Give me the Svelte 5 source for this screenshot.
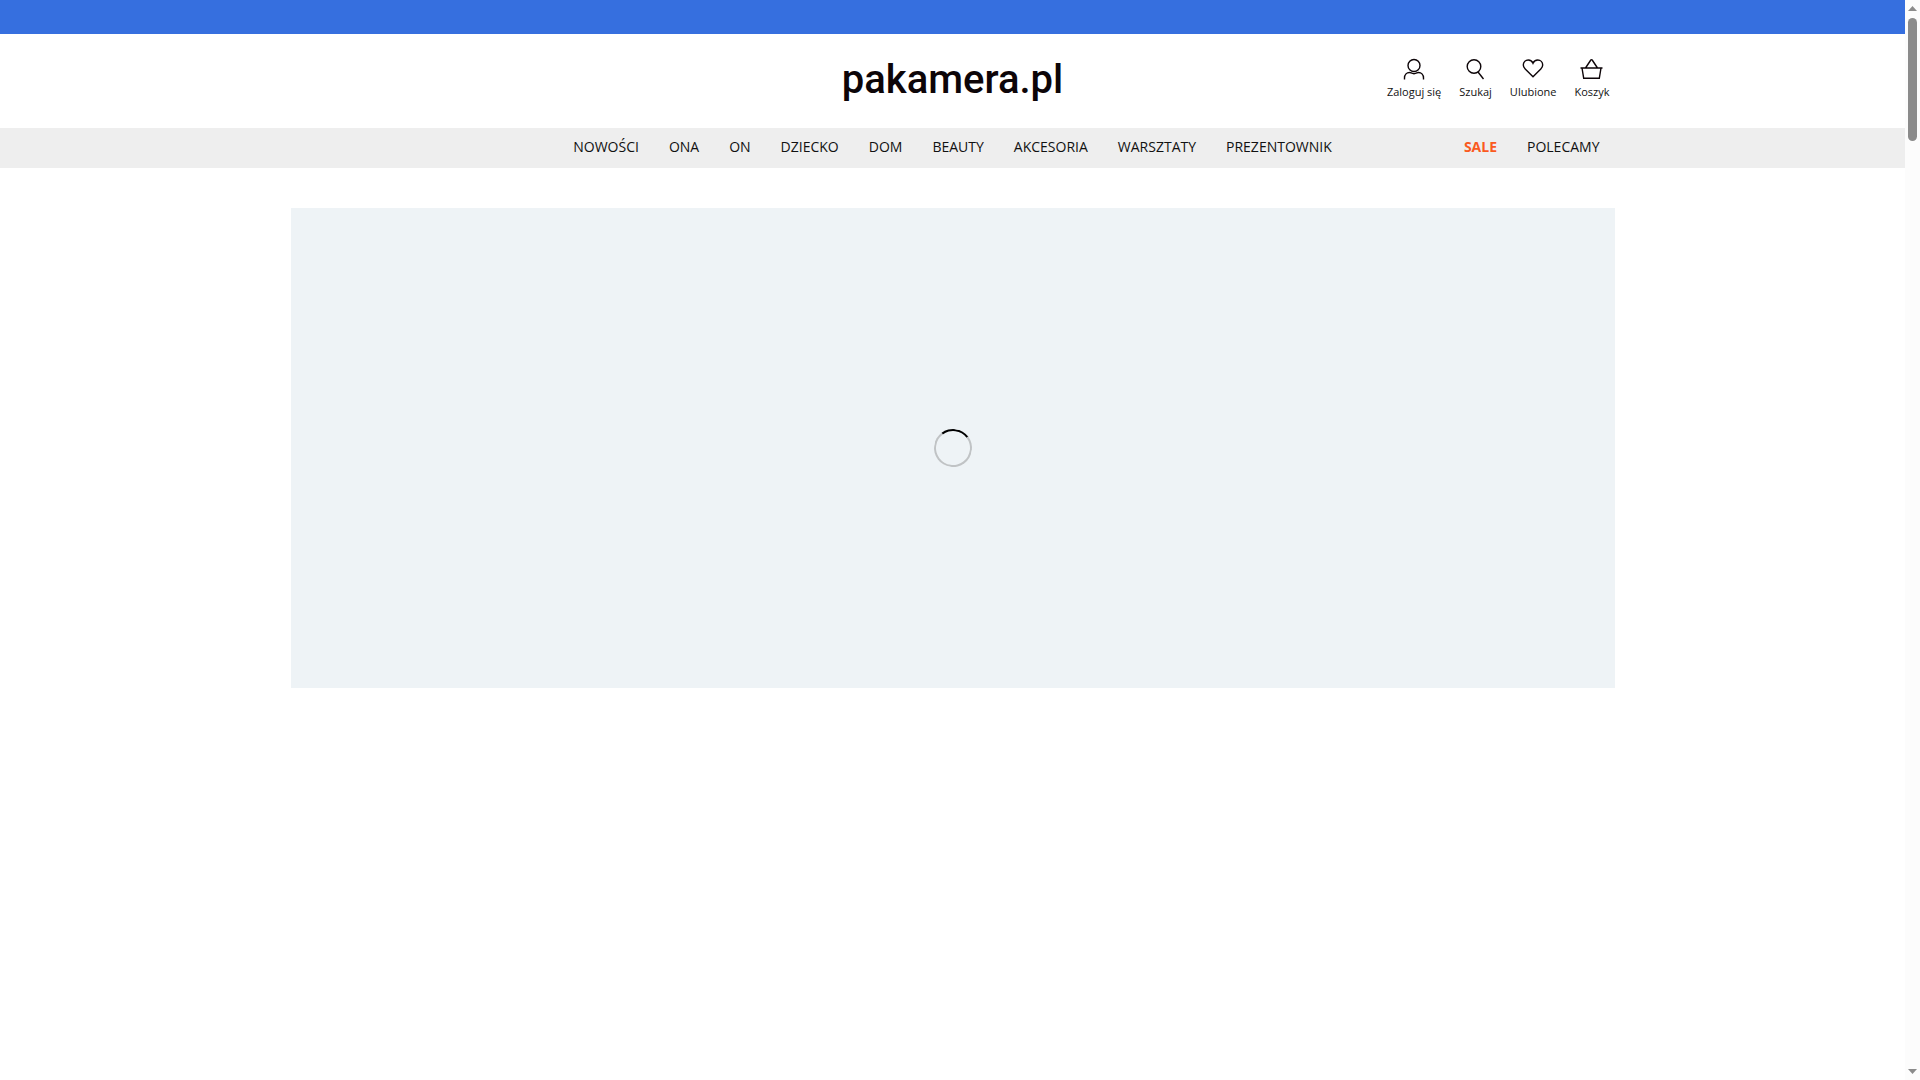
<script lang="ts">
	const categories = [
		'Nowości',
		'Ona',
		'On',
		'Dziecko',
		'Dom',
		'Beauty',
		'Akcesoria',
		'Warsztaty',
		'Prezentownik'
	];

	const tools = [
		{ id: 'login', label: 'Zaloguj się' },
		{ id: 'search', label: 'Szukaj' },
		{ id: 'favourites', label: 'Ulubione' },
		{ id: 'cart', label: 'Koszyk' }
	];
</script>

<div class="page">
	<div class="promo-bar"></div>

	<header class="header">
		<div class="container columns">
			<a class="logo" href="/">pakamera.pl</a>
			<div class="tools">
				{#each tools as tool (tool.id)}
					<a class="tool" href="/{tool.id}">
						<svg width="24" height="24" viewBox="0 0 24 24" aria-hidden="true">
							{#if tool.id === 'login'}
								<circle cx="12" cy="8.500" r="6" />
								<path d="M2.500 22.500v-1.500c0-3.500 2.300-5.500 5-5.500 1.500 0 2 1.200 4.500 1.200s3-1.200 4.500-1.200c2.700 0 5 2 5 5.500v1.500" />
							{:else if tool.id === 'search'}
								<circle cx="10" cy="9.500" r="6.800" />
								<path d="M14 15 19.500 22" />
							{:else if tool.id === 'favourites'}
								<path d="M12 19.700 4.200 12C2.500 10.300 2.300 9 2.300 8c0-3 2.200-5 4.900-5C9.300 3 11.200 4.200 12 6.200 12.800 4.200 14.700 3 16.800 3c2.700 0 4.900 2 4.900 5 0 1-.2 2.300-1.900 4z" />
							{:else}
								<path d="M.5 11h22M2 11l1.700 10.300h15.600L21 11M5.500 11l5.300-8q.7-.8 1.400 0l5.300 8" />
							{/if}
						</svg>
						<span>{tool.label}</span>
					</a>
				{/each}
			</div>
		</div>
	</header>

	<nav class="nav">
		<div class="container columns">
			<div class="links main-links">
				{#each categories as category}
					<a href="/{category.toLowerCase()}">{category}</a>
				{/each}
			</div>
			<div class="links side-links">
				<a class="sale" href="/sale">Sale</a>
				<a href="/polecamy">Polecamy</a>
			</div>
		</div>
	</nav>

	<main class="container">
		<section class="banner">
			<div class="spinner"></div>
		</section>
	</main>
</div>

<div class="scrollbar" aria-hidden="true">
	<svg width="9" height="5" viewBox="0 0 9 5"><path d="M0 5 4.500 0 9 5z" /></svg>
	<div class="thumb"></div>
	<svg class="down" width="9" height="5" viewBox="0 0 9 5"><path d="M0 0 4.500 5 9 0z" /></svg>
</div>

<style>
	:global(body) {
		background: #fff;
	}

	.page {
		min-height: 100vh;
		margin-right: 15px;
		font-family: 'Open Sans', 'Noto Sans', sans-serif;
		color: #111;
	}

	a {
		color: inherit;
		text-decoration: none;
	}

	.promo-bar {
		height: 34px;
		background: #366fdf;
	}

	.container {
		max-width: 1324px;
		margin: 0 auto;
	}

	.columns {
		display: grid;
		grid-template-columns: 1fr auto 1fr;
		align-items: center;
	}

	.header .columns {
		height: 92px;
		padding-bottom: 2px;
	}

	.logo {
		grid-column: 2;
		font-family: Roboto, sans-serif;
		font-size: 40px;
		font-weight: 500;
		line-height: 48px;
		color: #0d0508;
	}

	.tools {
		display: flex;
		justify-content: flex-end;
		gap: 18px;
		padding-right: 5px;
	}

	.tool {
		display: flex;
		flex-direction: column;
		align-items: center;
		font-size: 11px;
		line-height: 22px;
	}

	.tool svg {
		fill: none;
		stroke: #0d0508;
		stroke-width: 1.4;
	}

	.nav {
		background: #eee;
	}

	.nav .columns {
		height: 38px;
		padding-bottom: 2px;
	}

	.links {
		display: flex;
		gap: 30px;
		font-size: 14px;
		line-height: 20px;
		text-transform: uppercase;
	}

	.main-links {
		grid-column: 2;
	}

	.side-links {
		justify-content: flex-end;
		padding-right: 15px;
	}

	.sale {
		font-weight: 700;
		color: #fa5a1e;
	}

	main {
		padding: 40px 0;
	}

	.banner {
		display: flex;
		align-items: center;
		justify-content: center;
		height: 480px;
		background: #eef3f6;
	}

	.spinner {
		box-sizing: border-box;
		width: 38px;
		height: 38px;
		border: 2px solid #c0c3c5;
		border-top-color: #000;
		border-radius: 50%;
		transform: rotate(8deg);
	}

	.scrollbar {
		position: fixed;
		top: 0;
		right: 0;
		bottom: 0;
		display: flex;
		flex-direction: column;
		align-items: center;
		gap: 7px;
		box-sizing: border-box;
		width: 15px;
		padding: 6px 0;
		background: #fcfcfc;
	}

	.scrollbar svg {
		fill: #8b8b8b;
	}

	.scrollbar .down {
		margin-top: auto;
	}

	.thumb {
		width: 9px;
		height: 123px;
		border-radius: 5px;
		background: #8b8b8b;
	}
</style>
